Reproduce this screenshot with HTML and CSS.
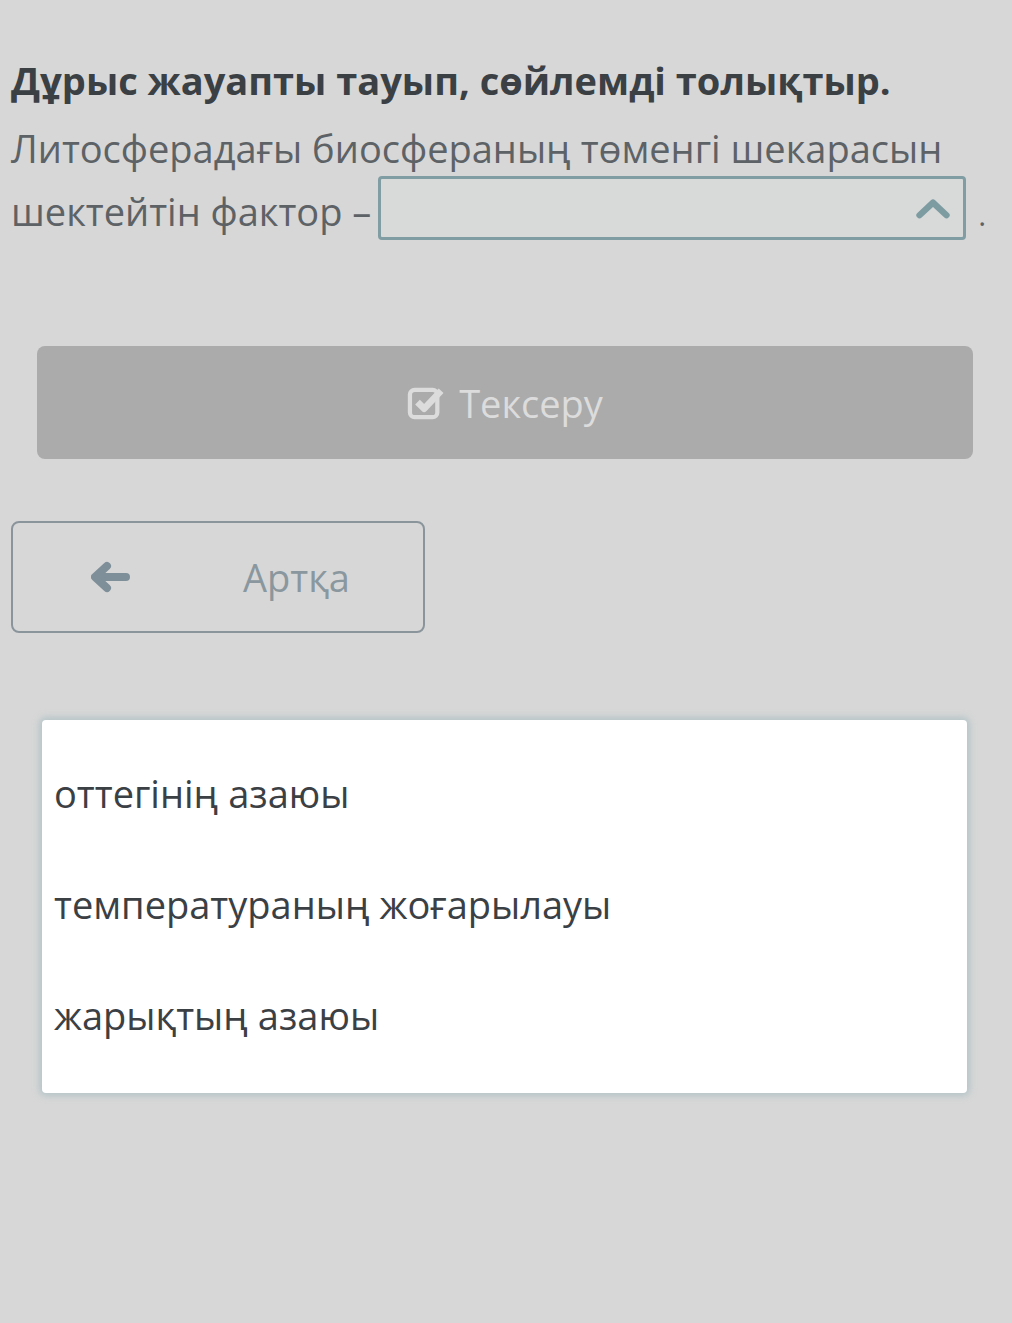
FILE: index.html
```html
<!DOCTYPE html>
<html lang="kk">
<head>
    <meta charset="utf-8">
    <link rel="stylesheet" href="styles.css">
</head>
<body>
    <div class="page">
        <!-- Question -->
        <h2 class="task">Дұрыс жауапты тауып, сөйлемді толықтыр.</h2>
        <p class="sentence">
            Литосферадағы биосфераның төменгі шекарасын шектейтін фактор –
            <span class="select">
                <svg class="chevron" viewBox="0 0 40 28" width="36" height="26">
                    <path d="M5 22 L20 8 L35 22" fill="none" stroke="#7c9ca2" stroke-width="7" stroke-linecap="round" stroke-linejoin="round"/>
                </svg>
            </span><span class="dot">.</span>
        </p>

        <!-- Check button -->
        <button class="check-btn" disabled>
            <svg class="check-icon" viewBox="0 0 40 36" width="38" height="34">
                <rect x="3" y="4" width="29" height="29" rx="5" fill="none" stroke="#dcdcdc" stroke-width="4.5"/>
                <path d="M11 17 L18 24 L36 5" fill="none" stroke="#dcdcdc" stroke-width="7" stroke-linejoin="round"/>
            </svg>
            Тексеру
        </button>

        <!-- Back button -->
        <button class="back-btn">
            <svg class="arrow" viewBox="0 0 40 32" width="40" height="32">
                <path d="M4 16 L16 5 M4 16 L16 27 M5 16 L35 16" fill="none" stroke="#7f8f99" stroke-width="8" stroke-linecap="round" stroke-linejoin="round"/>
            </svg>
            <span class="back-label">Артқа</span>
        </button>
    </div>

    <!-- Open dropdown list -->
    <ul class="options">
        <li>оттегінің азаюы</li>
        <li>температураның жоғарылауы</li>
        <li>жарықтың азаюы</li>
    </ul>
</body>
</html>
```

FILE: styles.css
```css
/* General */
body {
    margin: 0;
    padding: 0;
    font-family: "Open Sans", "Noto Sans", sans-serif;
    background-color: #d7d7d7;
    position: relative;
    min-height: 1323px;
}

.page {
    padding: 50px 0 0 11px;
}

/* Question */
.task {
    margin: 0;
    font-size: 38px;
    font-weight: 700;
    line-height: 60px;
    color: #3b4045;
}

.sentence {
    margin: 7px 0 0 0;
    width: 990px;
    font-size: 38px;
    line-height: 63px;
    color: #5d6266;
}

.select {
    display: inline-flex;
    justify-content: flex-end;
    align-items: center;
    box-sizing: border-box;
    width: 588px;
    height: 64px;
    margin: -4px 0 0 -3px;
    padding-right: 12px;
    vertical-align: top;
    border: 3px solid #7f9da2;
    border-radius: 4px;
    background-color: #d8d9d9;
}

.dot {
    margin-left: 12px;
    font-size: 30px;
}

/* Check button */
.check-btn {
    display: flex;
    justify-content: center;
    align-items: center;
    gap: 14px;
    width: 936px;
    height: 113px;
    margin: 100px 0 0 26px;
    font-family: inherit;
    font-size: 38px;
    color: #dcdcdc;
    background-color: #ababab;
    border: none;
    border-radius: 8px;
}

/* Back button */
.back-btn {
    display: flex;
    align-items: center;
    box-sizing: border-box;
    width: 414px;
    height: 112px;
    margin-top: 62px;
    padding: 0 0 0 78px;
    font-family: inherit;
    font-size: 38px;
    color: #8a979e;
    background-color: transparent;
    border: 2.5px solid #8a959b;
    border-radius: 8px;
}

.back-label {
    margin-left: 112px;
}

/* Dropdown list */
.options {
    position: absolute;
    top: 720px;
    left: 42px;
    box-sizing: border-box;
    width: 925px;
    height: 373px;
    margin: 0;
    padding: 18px 0 0 12px;
    list-style: none;
    background-color: #ffffff;
    border-radius: 4px;
    box-shadow: 0 0 6px 3px rgba(160, 185, 190, 0.6);
}

.options li {
    height: 111px;
    line-height: 111px;
    font-size: 38px;
    color: #3b4045;
}
```
